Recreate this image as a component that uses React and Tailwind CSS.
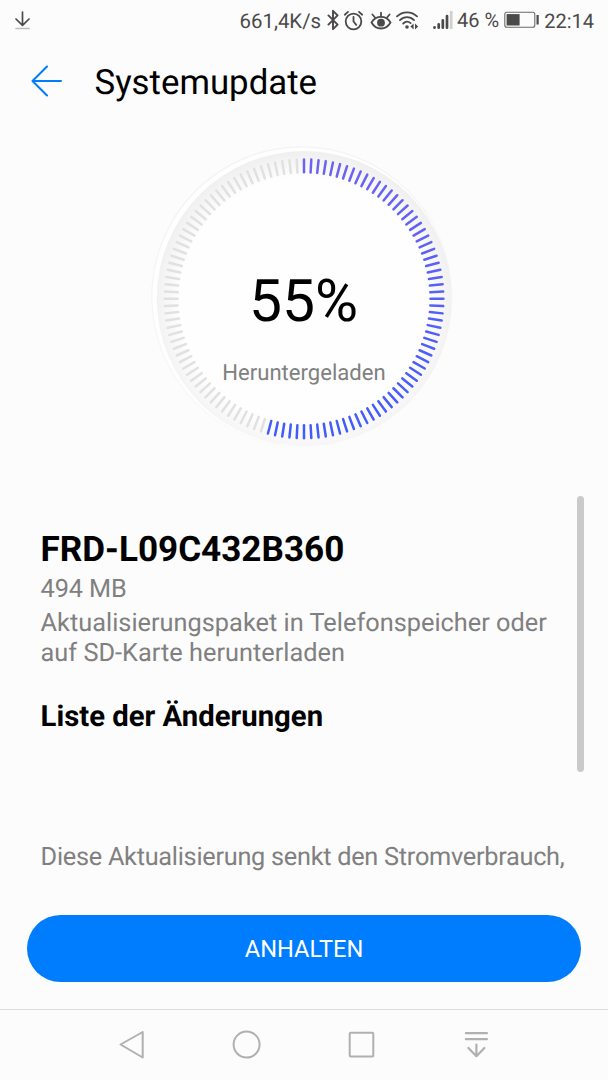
import { Bluetooth } from 'lucide-react'

const TICKS = 120
const PERCENT = 55

function StatusBar() {
  return (
    <div className="flex h-10 items-center pl-3 pr-[14px] text-[#4a4a4a]">
      <svg className="mt-px" width="22" height="22" viewBox="0 0 22 22" fill="none" stroke="currentColor" strokeWidth="1.7" strokeLinecap="round" strokeLinejoin="round">
        <path d="M10.5 2v13M4 9l6.5 6.3L17 9" />
        <path d="M4 18.5h13" stroke="#bdbdbd" />
      </svg>

      <div className="ml-auto flex items-center">
        <span className="pt-0.5 text-[20.4px] leading-10">661,4K/s</span>
        <Bluetooth className="ml-px h-[22px] w-[22px]" strokeWidth={2.1} />

        {/* alarm */}
        <svg className="-ml-px" width="22" height="22" viewBox="0 0 22 22" fill="none" stroke="currentColor" strokeWidth="1.8" strokeLinecap="round">
          <circle cx="10.5" cy="12.5" r="7.8" />
          <path d="M10.5 8v4.5l2.8 3.4M1.8 5.7L5 2.9M19.2 5.7L16 2.9" />
        </svg>

        {/* eye comfort */}
        <svg className="ml-[5px]" width="22" height="22" viewBox="0 0 22 22" fill="none" stroke="currentColor" strokeWidth="1.8" strokeLinecap="round">
          <path d="M1.5 13.5C6 6.1 16 6.1 20.5 13.5 16 21.5 6 21.5 1.5 13.5z" />
          <circle cx="11" cy="13.7" r="3.9" fill="currentColor" stroke="none" />
          <path d="M11 7.5V3.7M5 8.5L2.4 5.5M17 8.5l2.6-3" />
        </svg>

        {/* wifi */}
        <svg className="ml-1" width="24" height="22" viewBox="0 0 24 22" fill="none" stroke="currentColor" strokeWidth="1.8" strokeLinecap="round">
          <path d="M1 7.4C6.5 1.9 15.5 1.9 21 7.4M4 11.2c4-4 10-4 14 0M7.2 14.5c2.2-2.2 5.2-2.2 7.4-.4" />
          <circle cx="11" cy="18" r="1.8" fill="currentColor" stroke="none" />
          <path d="M14.4 17.5l3.2-3v6zM22.2 17.5l-3.2-3v6z" fill="currentColor" stroke="none" />
        </svg>

        {/* signal */}
        <svg className="ml-[13px]" width="20" height="20" viewBox="0 0 20 20" fill="none" stroke="currentColor" strokeWidth="2.7" strokeLinecap="round">
          <path d="M1.5 17.3v.4M5.7 14.3v3.4M9.8 10.3v7.4M14 6v11.7" />
          <path d="M18.2 1v18" stroke="#d0d0d0" strokeLinecap="butt" />
        </svg>
        <span className="ml-1 text-[20px] leading-10">46 %</span>
        <svg className="ml-[5px]" width="36" height="18" viewBox="0 0 36 18" fill="none">
          <rect x="0.8" y="1.3" width="30" height="15" rx="2" stroke="#6a6a6a" strokeWidth="1.1" />
          <rect x="2.6" y="3.1" width="13" height="11.4" fill="#4a4a4a" />
          <path d="M33.6 4v9.5" stroke="#4a4a4a" strokeWidth="2.2" />
        </svg>
        <span className="ml-1 pt-0.5 text-[20px] leading-10">22:14</span>
      </div>
    </div>
  )
}

function Header() {
  return (
    <div className="flex h-[84px] items-center pl-[30px]">
      <svg width="34" height="34" viewBox="0 0 34 34" fill="none" stroke="#007dff" strokeWidth="2.1" strokeLinecap="round" strokeLinejoin="round">
        <path d="M31 16H2.5M17 1.5L2.5 16 17 30.5" />
      </svg>
      <h1 className="ml-[30.5px] pt-[3px] text-[34.8px] text-black">Systemupdate</h1>
    </div>
  )
}

function ProgressDial() {
  const active = (TICKS * PERCENT) / 100

  return (
    <div className="grid h-[310px] place-items-center">
      <svg className="col-start-1 row-start-1" width="310" height="310" viewBox="0 0 310 310">
        <defs>
          <radialGradient id="disc" gradientUnits="userSpaceOnUse" cx="155" cy="157" r="148">
            <stop offset="0.84" stopColor="#fefefe" />
            <stop offset="1" stopColor="#f0f0f0" />
          </radialGradient>
          <linearGradient id="fade" x1="0" y1="0" x2="0.5" y2="1">
            <stop offset="0" stopColor="#f1f1f1" />
            <stop offset="1" stopColor="#fafafa" />
          </linearGradient>
          <linearGradient id="soft" x1="0" y1="0" x2="0" y2="1">
            <stop offset="0.3" stopColor="#fefefe" stopOpacity="0" />
            <stop offset="1" stopColor="#fefefe" stopOpacity="0.35" />
          </linearGradient>
          <linearGradient id="ticks" gradientUnits="userSpaceOnUse" x1="0" y1="15" x2="0" y2="296">
            <stop offset="0" stopColor="#6d63f4" />
            <stop offset="1" stopColor="#405cfa" />
          </linearGradient>
        </defs>
        <circle cx="152.8" cy="152.8" r="150" fill="#fefefe" stroke="url(#fade)" strokeWidth="1.2" />
        <circle cx="155.3" cy="154.6" r="147.5" fill="url(#disc)" />
        <circle cx="155.3" cy="154.6" r="147.5" fill="url(#soft)" />
        {Array.from({ length: TICKS }, (_, i) => {
          const angle = (i * 2 * Math.PI) / TICKS
          const sin = Math.sin(angle)
          const cos = Math.cos(angle)
          return (
            <line
              key={i}
              x1={155 + 126.5 * sin}
              y1={154.8 - 126.5 * cos}
              x2={155 + 139.4 * sin}
              y2={154.8 - 139.4 * cos}
              stroke={i < active ? 'url(#ticks)' : '#e1e1e1'}
              strokeWidth="2.5"
              strokeLinecap="round"
            />
          )
        })}
      </svg>
      <div className="col-start-1 row-start-1 flex flex-col items-center pt-[60px]">
        <p className="pr-px text-[58.8px] leading-[70px] text-black">{PERCENT}%</p>
        <p className="mt-[18px] text-[22.1px] leading-[36px] text-[#808080]">Heruntergeladen</p>
      </div>
    </div>
  )
}

function Details() {
  return (
    <div className="flex h-[418px] justify-between pl-[40.6px] pr-6 pt-[42px]">
      <div className="pt-8 text-[25.3px] leading-[30px] text-[#808080]">
        <h2 className="text-[35.1px] font-bold leading-[42px] text-black">FRD-L09C432B360</h2>
        <p className="mt-[5px] tracking-[-0.1px]">494 MB</p>
        <p className="mt-1 whitespace-nowrap tracking-[0.02px]">
          Aktualisierungspaket in Telefonspeicher oder
          <br />
          auf SD-Karte herunterladen
        </p>
        <h3 className="mt-[30px] text-[29.3px] font-bold leading-[36px] text-black">Liste der Änderungen</h3>
        <p className="mt-[108px] w-[500px] whitespace-nowrap tracking-[-0.27px]">Diese Aktualisierung senkt den Stromverbrauch,</p>
      </div>
      <div className="h-[276px] w-[7px] rounded-full bg-[#cacaca]" />
    </div>
  )
}

function NavBar() {
  return (
    <div className="flex h-[71px] items-center justify-center gap-[85px] border-t border-[#dcdcdc] text-[#b0b0b0]">
      <svg width="30" height="30" viewBox="0 0 30 30" fill="none" stroke="currentColor" strokeWidth="2" strokeLinejoin="round">
        <path d="M3.5 14.5L25.7 2v25.5z" />
      </svg>
      <svg width="30" height="30" viewBox="0 0 30 30" fill="none" stroke="currentColor" strokeWidth="2">
        <circle cx="14.6" cy="14.6" r="13" />
      </svg>
      <svg width="30" height="30" viewBox="0 0 30 30" fill="none" stroke="currentColor" strokeWidth="2">
        <rect x="2.7" y="2.8" width="23.6" height="23.6" rx="1" />
      </svg>
      <svg width="30" height="30" viewBox="0 0 30 30" fill="none" stroke="currentColor" strokeWidth="2.2" strokeLinecap="round" strokeLinejoin="round">
        <path d="M3.9 3.2h21M3.9 9.2h21M14.4 14.5v11.7M6.4 18l8 8.2 8-8.2" />
      </svg>
    </div>
  )
}

export default function App() {
  return (
    <main className="flex h-[1080px] w-[608px] flex-col overflow-hidden bg-[#fcfcfc] font-['Roboto',sans-serif] [text-rendering:geometricPrecision]">
      <StatusBar />
      <Header />
      <div className="pt-5">
        <ProgressDial />
      </div>
      <Details />
      <div className="mt-auto px-[27px] pb-[27px]">
        <button className="h-[67px] w-full rounded-full bg-[#007dff] pt-[3px] text-[23.6px] text-white">ANHALTEN</button>
      </div>
      <NavBar />
    </main>
  )
}
